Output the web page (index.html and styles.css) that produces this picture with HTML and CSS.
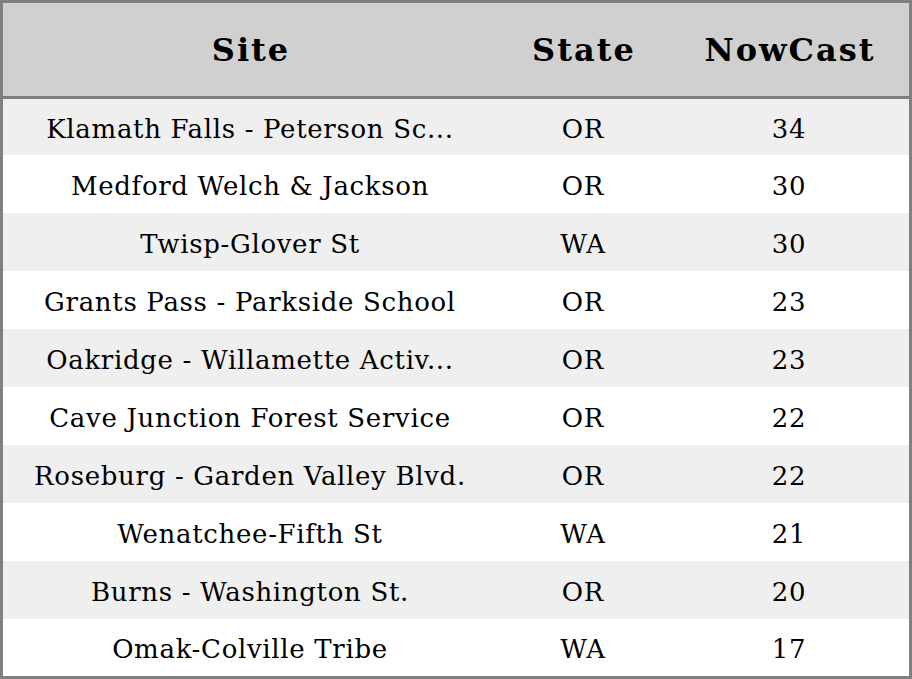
FILE: index.html
```html
<!DOCTYPE html>
<html>
<head>
<meta charset="utf-8">
<link rel="stylesheet" href="styles.css">
</head>
<body>
<table class="grid">
  <colgroup>
    <col class="c-site">
    <col class="c-state">
    <col class="c-now">
  </colgroup>
  <thead>
    <tr><th>Site</th><th>State</th><th>NowCast</th></tr>
  </thead>
  <tbody>
    <tr><td>Klamath Falls - Peterson Sc...</td><td>OR</td><td>34</td></tr>
    <tr><td>Medford Welch &amp; Jackson</td><td>OR</td><td>30</td></tr>
    <tr><td>Twisp-Glover St</td><td>WA</td><td>30</td></tr>
    <tr><td>Grants Pass - Parkside School</td><td>OR</td><td>23</td></tr>
    <tr><td>Oakridge - Willamette Activ...</td><td>OR</td><td>23</td></tr>
    <tr><td>Cave Junction Forest Service</td><td>OR</td><td>22</td></tr>
    <tr><td>Roseburg - Garden Valley Blvd.</td><td>OR</td><td>22</td></tr>
    <tr><td>Wenatchee-Fifth St</td><td>WA</td><td>21</td></tr>
    <tr><td>Burns - Washington St.</td><td>OR</td><td>20</td></tr>
    <tr><td>Omak-Colville Tribe</td><td>WA</td><td>17</td></tr>
  </tbody>
</table>
</body>
</html>
```
FILE: styles.css
```css
html, body {
  margin: 0;
  padding: 0;
  background: #ffffff;
}
.grid {
  width: 912px;
  height: 679px;
  border-collapse: separate;
  border-spacing: 0;
  border: 3px solid #808080;
  box-sizing: border-box;
  font-family: "DejaVu Serif", serif;
  color: #000;
  table-layout: fixed;
}
.c-site { width: 494px; }
.c-state { width: 172px; }
.c-now { width: auto; }
.grid thead tr {
  height: 96px;
}
.grid th {
  background: #d0d0d0;
  border-bottom: 3px solid #808080;
  font-size: 32px;
  font-weight: bold;
  letter-spacing: 2px;
  text-align: center;
  padding: 0 0 0 2px;
}
.grid tbody tr {
  height: 58px;
}
.grid tbody tr:first-child {
  height: 56px;
}
.grid tbody tr:last-child {
  height: 57px;
}
.grid td {
  font-size: 26px;
  letter-spacing: 0.68px;
  text-align: center;
  padding: 3px 0 0 0;
  white-space: nowrap;
}
.grid tbody tr:nth-child(odd) td {
  background: #efefef;
}
```
